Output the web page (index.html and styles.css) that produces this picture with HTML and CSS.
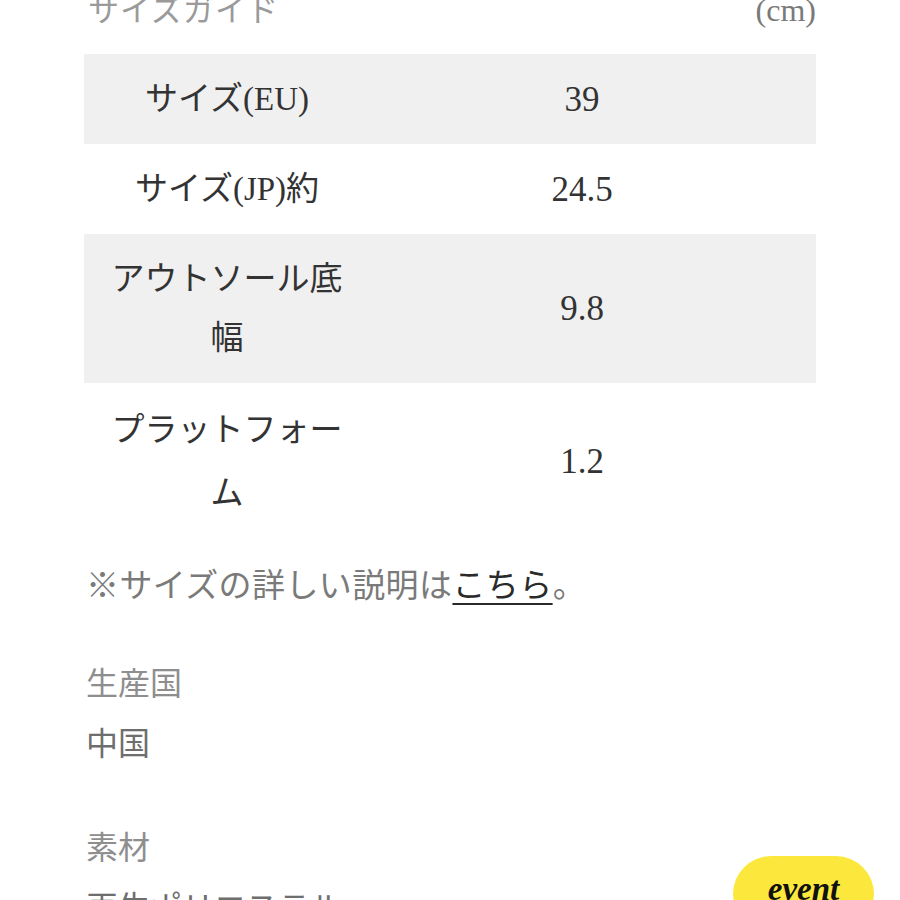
FILE: index.html
```html
<!DOCTYPE html>
<html lang="ja">
<head>
<meta charset="utf-8">
<title>サイズガイド</title>
<link rel="stylesheet" href="styles.css">
</head>
<body>
<div class="page">
  <div class="guide-head">
    <span class="guide-title">サイズガイド</span>
    <span class="guide-unit">(cm)</span>
  </div>
  <table class="size-table">
    <tr class="row-gray">
      <td class="label">サイズ(EU)</td>
      <td class="value">39</td>
    </tr>
    <tr>
      <td class="label">サイズ(JP)約</td>
      <td class="value">24.5</td>
    </tr>
    <tr class="row-gray">
      <td class="label">アウトソール底幅</td>
      <td class="value">9.8</td>
    </tr>
    <tr class="row-last">
      <td class="label">プラットフォーム</td>
      <td class="value">1.2</td>
    </tr>
  </table>
  <p class="note">※サイズの詳しい説明は<a class="note-link" href="#">こちら</a>。</p>
  <dl class="spec">
    <div class="spec-group">
      <dt>生産国</dt>
      <dd>中国</dd>
    </div>
    <div class="spec-group">
      <dt>素材</dt>
      <dd>再生ポリエステル</dd>
    </div>
  </dl>
</div>
<div class="event-badge">event</div>
</body>
</html>
```
FILE: styles.css
```css
html, body {
  margin: 0;
  padding: 0;
  background: #ffffff;
  overflow: hidden;
}
body {
  font-family: "Liberation Serif", "Noto Sans CJK JP", serif;
  font-size: 34px;
  color: #333333;
}
.page {
  padding: 0 84px;
}
.guide-head {
  display: flex;
  justify-content: space-between;
  align-items: baseline;
  margin-top: -22px;
  height: 60px;
  line-height: 60px;
  margin-bottom: 16px;
  color: #8a8a8a;
}
.guide-title {
  font-family: "Noto Sans CJK JP", sans-serif;
  font-size: 31px;
  letter-spacing: 1px;
  padding-left: 4px;
  color: #9a9a9a;
}
.guide-unit {
  font-size: 32px;
  color: #7a7a7a;
}
.size-table {
  width: 100%;
  border-collapse: collapse;
}
.size-table td {
  padding: 15.5px 0;
  line-height: 59px;
  vertical-align: middle;
  text-align: center;
}
.row-last td {
  line-height: 63px;
}
.row-gray {
  background: #f0f0f0;
}
.label {
  width: 286px;
  box-sizing: border-box;
  padding-left: 18px !important;
  padding-right: 18px !important;
  font-size: 33px;
}
.value {
  padding-right: 22px !important;
  font-size: 35px;
}
.note {
  margin: 13px 0 0;
  line-height: 60px;
  font-family: "Noto Sans CJK JP", sans-serif;
  font-size: 33px;
  letter-spacing: 0.4px;
  color: #7a7a7a;
  padding-left: 2px;
}
.note-link {
  color: #2a2a2a;
  text-decoration: underline;
  text-underline-offset: 6px;
  text-decoration-thickness: 2px;
}
.spec {
  margin: 38px 0 0;
  font-family: "Noto Sans CJK JP", sans-serif;
  font-size: 32px;
}
.spec-group {
  margin-bottom: 43px;
}
.spec dt {
  line-height: 60px;
  color: #8e8e8e;
  padding-left: 2px;
}
.spec dd {
  margin: 0;
  line-height: 61px;
  color: #6e6e6e;
  padding-left: 2px;
}
.event-badge {
  position: fixed;
  left: 733px;
  top: 856px;
  width: 141px;
  height: 76px;
  border-radius: 38px;
  background: #fce83c;
  color: #111111;
  font-family: "Liberation Serif", serif;
  font-style: italic;
  font-weight: bold;
  font-size: 33px;
  text-align: center;
  line-height: 66px;
}
```
